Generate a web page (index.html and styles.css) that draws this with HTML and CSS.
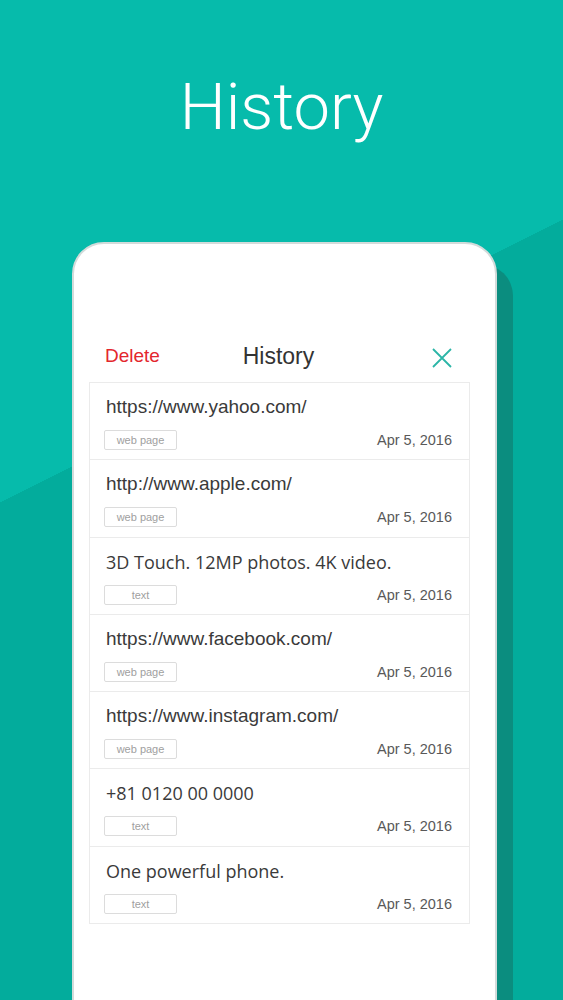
FILE: index.html
```html
<!DOCTYPE html>
<html lang="en">
<head>
    <meta charset="UTF-8">
    <meta name="viewport" content="width=device-width, initial-scale=1.0">
    <title>History</title>
    <link rel="stylesheet" href="styles.css">
</head>
<body>
    <div class="screen">
        <h1 class="title">History</h1>

        <!-- Phone mockup -->
        <div class="phone">
            <div class="panel">
                <div class="panel-header">
                    <span class="delete">Delete</span>
                    <span class="panel-title">History</span>
                    <span class="close">
                        <svg width="20" height="20" viewBox="0 0 20 20">
                            <path d="M1 1 L19 19 M19 1 L1 19" stroke="#2bb5a7" stroke-width="1.8" fill="none"/>
                        </svg>
                    </span>
                </div>

                <ul class="history-list">
                    <li class="item">
                        <div class="item-text">https://www.yahoo.com/</div>
                        <div class="item-meta">
                            <span class="tag">web page</span>
                            <span class="date">Apr 5, 2016</span>
                        </div>
                    </li>
                    <li class="item">
                        <div class="item-text">http://www.apple.com/</div>
                        <div class="item-meta">
                            <span class="tag">web page</span>
                            <span class="date">Apr 5, 2016</span>
                        </div>
                    </li>
                    <li class="item">
                        <div class="item-text alt">3D Touch. 12MP photos. 4K video.</div>
                        <div class="item-meta">
                            <span class="tag">text</span>
                            <span class="date">Apr 5, 2016</span>
                        </div>
                    </li>
                    <li class="item">
                        <div class="item-text">https://www.facebook.com/</div>
                        <div class="item-meta">
                            <span class="tag">web page</span>
                            <span class="date">Apr 5, 2016</span>
                        </div>
                    </li>
                    <li class="item">
                        <div class="item-text">https://www.instagram.com/</div>
                        <div class="item-meta">
                            <span class="tag">web page</span>
                            <span class="date">Apr 5, 2016</span>
                        </div>
                    </li>
                    <li class="item">
                        <div class="item-text alt">+81 0120 00 0000</div>
                        <div class="item-meta">
                            <span class="tag">text</span>
                            <span class="date">Apr 5, 2016</span>
                        </div>
                    </li>
                    <li class="item">
                        <div class="item-text alt">One powerful phone.</div>
                        <div class="item-meta">
                            <span class="tag">text</span>
                            <span class="date">Apr 5, 2016</span>
                        </div>
                    </li>
                </ul>
            </div>
        </div>
    </div>
</body>
</html>
```

FILE: styles.css
```css
body {
    margin: 0;
    padding: 0;
    font-family: "Liberation Sans", Arial, sans-serif;
    color: #333;
}
.screen {
    height: 1000px;
    overflow: hidden;
    /* two tone teal split by a diagonal */
    background: linear-gradient(153.3deg, #06bbab 449px, #03ac9c 449px);
}
.title {
    margin: 0;
    padding-top: 75px;
    font-family: Roboto, "Liberation Sans", sans-serif;
    font-weight: 300;
    font-size: 65px;
    line-height: 65px;
    color: #fff;
    text-align: center;
}
.phone {
    margin: 102px 0 0 72px;
    width: 421px;
    height: 800px;
    background-color: #fff;
    border: 2px solid #d3dbda;
    border-radius: 32px;
    box-shadow: 16px 22px 0 #0b8d7f;
}
.panel {
    margin: 96px 0 0 15px;
    width: 381px;
}
.panel-header {
    display: grid;
    grid-template-columns: 1fr auto 1fr;
    align-items: center;
    height: 32px;
    padding: 0 18px 0 16px;
    margin-bottom: 10px;
}
.delete {
    font-size: 19px;
    color: #e3262d;
}
.panel-title {
    font-size: 23px;
    color: #333;
}
.close {
    justify-self: end;
    display: flex;
    margin-top: 4px;
}
.history-list {
    list-style: none;
    margin: 0;
    padding: 0;
    border: 1px solid #ebebeb;
    border-bottom: none;
}
.item {
    padding: 13px 17px 0 14px;
    box-sizing: border-box;
    height: 77.3px;
    border-bottom: 1px solid #ebebeb;
}
.item-text {
    padding-left: 2px;
    font-size: 19px;
    line-height: 22px;
    color: #3a3a3a;
}
.item-text.alt {
    font-family: "Open Sans", "Liberation Sans", sans-serif;
    font-size: 18px;
}
.item-meta {
    display: flex;
    justify-content: space-between;
    align-items: center;
    margin-top: 12px;
}
.tag {
    width: 73px;
    height: 20px;
    box-sizing: border-box;
    border: 1px solid #dcdcdc;
    border-radius: 2px;
    font-size: 11px;
    line-height: 18px;
    color: #a0a0a0;
    text-align: center;
}
.date {
    font-size: 14.5px;
    color: #595959;
}
```
